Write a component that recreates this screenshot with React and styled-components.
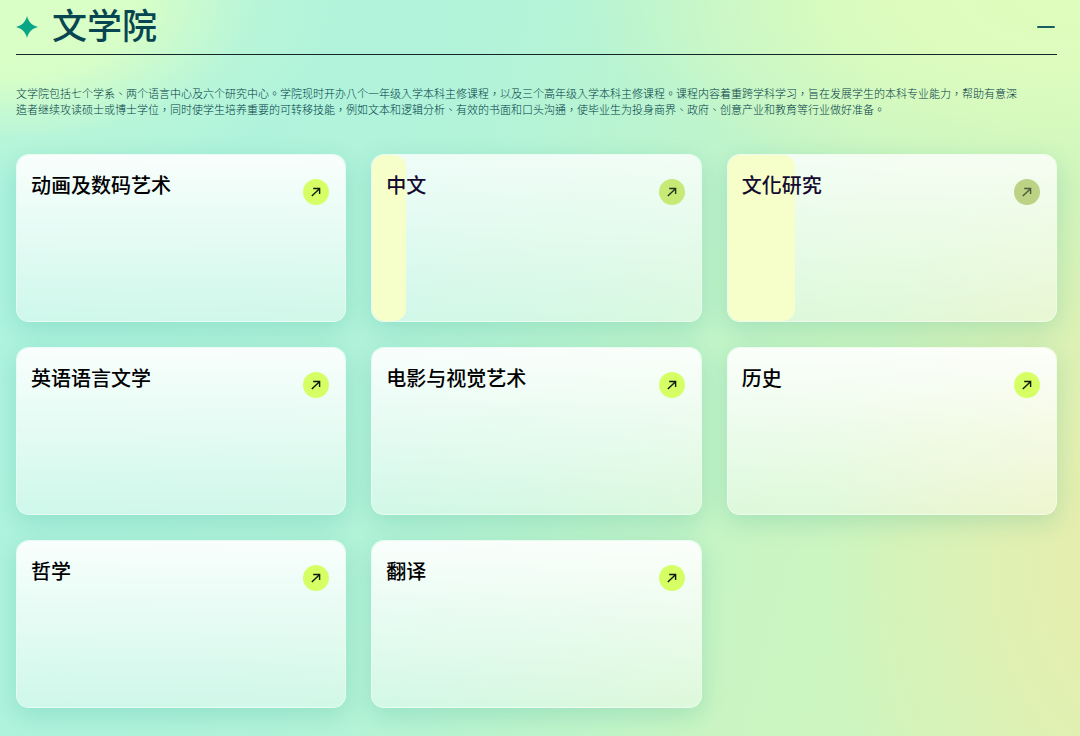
import { useState } from "react";
import styled, { createGlobalStyle } from "styled-components";

// ========== DATA ==========

const programmes = [
  { name: "动画及数码艺术" },
  { name: "中文", fill: 10, dot: "#c6ea75", arrow: "#26331c" },
  { name: "文化研究", fill: 20, dot: "#bcd285", arrow: "#4c5b3c" },
  { name: "英语语言文学" },
  { name: "电影与视觉艺术" },
  { name: "历史" },
  { name: "哲学" },
  { name: "翻译" },
];

// ========== STYLED COMPONENTS ==========

const GlobalStyle = createGlobalStyle`
  * {
    box-sizing: border-box;
  }

  body {
    margin: 0;
    font-family: "Noto Sans CJK TC", "Noto Sans CJK SC", sans-serif;
    color: #000;
  }
`;

const Page = styled.main`
  min-height: 100vh;
  padding: 0 23px 28px 16px;
  background:
    radial-gradient(ellipse 32% 26% at 0% 0%, #daffc6 0%, #d8fec7 40%, rgba(200, 250, 208, 0.4) 72%, rgba(178, 243, 220, 0) 100%),
    radial-gradient(ellipse 46% 26% at 100% 0%, #dffdbc 0%, #dcfcbe 40%, rgba(220, 252, 190, 0) 100%),
    radial-gradient(ellipse 32% 58% at 108% 76%, #e8eba8 0%, rgba(230, 238, 174, 0.8) 40%, rgba(222, 243, 182, 0) 100%),
    linear-gradient(106deg, #adf3df 0%, #b2f3da 38%, #bbf4cf 54%, #caf5c2 72%, #d2f5ba 100%);
`;

const Header = styled.header`
  display: flex;
  align-items: center;
  justify-content: space-between;
  min-height: 55px;
  border-bottom: 1px solid #14262a;
`;

const Heading = styled.h2`
  display: flex;
  align-items: center;
  gap: 14px;
  margin: 0;
  padding-bottom: 6px;
  font-size: 35px;
  font-weight: 500;
  line-height: 48px;
  color: #074650;
`;

const Star = styled.svg`
  width: 22px;
  height: 22px;
  margin-top: 6px;
  fill: #06a687;
`;

const ToggleButton = styled.button`
  display: flex;
  padding: 0;
  border: 0;
  background: none;
  color: #17605f;
  cursor: pointer;
`;

const Description = styled.p`
  max-width: 91em;
  margin: 30px 0 37px;
  font-size: 11px;
  font-weight: 300;
  line-height: 16px;
  color: #003c46;
`;

const Grid = styled.div`
  display: grid;
  grid-template-columns: repeat(3, 1fr);
  gap: 25px;
`;

const Card = styled.a`
  position: relative;
  display: flex;
  align-items: flex-start;
  justify-content: space-between;
  min-height: 168px;
  padding: 14px 16px 14px 14px;
  overflow: hidden;
  border: 1px solid rgba(255, 255, 255, 0.7);
  border-radius: 13px;
  background: linear-gradient(
    180deg,
    rgba(255, 255, 255, ${({ $fill }) => ($fill ? 0.8 : 0.92)}) 0%,
    rgba(255, 255, 255, 0.4) 100%
  );
  background-clip: padding-box;
  box-shadow: 0 7px 24px rgba(20, 150, 130, 0.2);
  color: ${({ $fill }) => ($fill ? "#150b30" : "#000")};
  text-decoration: none;
`;

const Sweep = styled.span`
  position: absolute;
  inset: 0 auto 0 0;
  border-radius: 12px;
  background: #f6ffca;
`;

const CardTitle = styled.span`
  position: relative;
  font-size: 20px;
  font-weight: 500;
  line-height: 32px;
`;

const Dot = styled.span`
  display: flex;
  align-items: center;
  justify-content: center;
  width: 26px;
  height: 26px;
  margin-top: 10px;
  border-radius: 50%;
  background: ${({ $color }) => $color};
  color: ${({ $arrow }) => $arrow};
`;

// ========== COMPONENTS ==========

function ArrowIcon() {
  return (
    <svg width="12" height="12" viewBox="0 0 12 12" fill="none" stroke="currentColor" strokeWidth="1.4" aria-hidden="true">
      <path d="M1.8 10L9.2 3M3.2 2.5H9.6V8" />
    </svg>
  );
}

function ProgrammeCard({ name, fill, dot = "#d5ff65", arrow = "#101a08" }) {
  return (
    <Card href="#" $fill={fill}>
      {fill && <Sweep style={{ width: `${fill + 0.4}%` }} />}
      <CardTitle>{name}</CardTitle>
      <Dot $color={dot} $arrow={arrow}>
        <ArrowIcon />
      </Dot>
    </Card>
  );
}

export default function App() {
  const [open, setOpen] = useState(true);

  return (
    <Page lang="zh-Hant">
      <GlobalStyle />
      <Header>
        <Heading>
          <Star viewBox="0 0 22 22" aria-hidden="true">
            <path d="M11 0C12.6 6 16 9.4 22 11C16 12.6 12.6 16 11 22C9.4 16 6 12.6 0 11C6 9.4 9.4 6 11 0Z" />
          </Star>
          文学院
        </Heading>
        <ToggleButton type="button" aria-label="文学院" aria-expanded={open} onClick={() => setOpen(!open)}>
          <svg width="22" height="22" viewBox="0 0 22 22" stroke="currentColor" strokeWidth="2" strokeLinecap="round">
            <path d="M3 11H19" />
            {!open && <path d="M11 3V19" />}
          </svg>
        </ToggleButton>
      </Header>

      {open && (
        <>
          <Description>
            文学院包括七个学系、两个语言中心及六个研究中心。学院现时开办八个一年级入学本科主修课程，以及三个高年级入学本科主修课程。课程内容着重跨学科学习，旨在发展学生的本科专业能力，帮助有意深造者继续攻读硕士或博士学位，同时使学生培养重要的可转移技能，例如文本和逻辑分析、有效的书面和口头沟通，使毕业生为投身商界、政府、创意产业和教育等行业做好准备。
          </Description>
          <Grid>
            {programmes.map((programme) => (
              <ProgrammeCard key={programme.name} {...programme} />
            ))}
          </Grid>
        </>
      )}
    </Page>
  );
}
